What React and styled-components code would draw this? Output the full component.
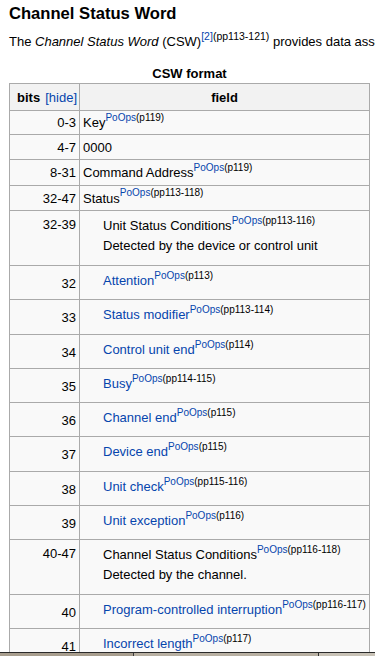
import React from "react";
import styled, { createGlobalStyle } from "styled-components";

const GlobalStyle = createGlobalStyle`
  html, body {
    margin: 0;
    padding: 0;
    background: #FFFFFF;
    overflow: hidden;
  }
  body {
    font-family: "Liberation Sans", Arial, sans-serif;
    color: #000000;
  }
`;

const LINK = "#0645AD";
const BORDER = "#AAAAAA";

const rows = [
  { bits: "0-3", label: "Key", ref: "(p119)", h: 24 },
  { bits: "4-7", label: "0000", h: 25 },
  { bits: "8-31", label: "Command Address", ref: "(p119)", h: 26 },
  { bits: "32-47", label: "Status", ref: "(pp113-118)", h: 25 },
  {
    bits: "32-39",
    label: "Unit Status Conditions",
    ref: "(pp113-116)",
    note: "Detected by the device or control unit",
    nested: true,
    h: 55,
  },
  { bits: "32", label: "Attention", ref: "(p113)", nested: true, link: true, h: 34 },
  { bits: "33", label: "Status modifier", ref: "(pp113-114)", nested: true, link: true, h: 35 },
  { bits: "34", label: "Control unit end", ref: "(p114)", nested: true, link: true, h: 34 },
  { bits: "35", label: "Busy", ref: "(pp114-115)", nested: true, link: true, h: 34 },
  { bits: "36", label: "Channel end", ref: "(p115)", nested: true, link: true, h: 34 },
  { bits: "37", label: "Device end", ref: "(p115)", nested: true, link: true, h: 35 },
  { bits: "38", label: "Unit check", ref: "(pp115-116)", nested: true, link: true, h: 34 },
  { bits: "39", label: "Unit exception", ref: "(p116)", nested: true, link: true, h: 34 },
  {
    bits: "40-47",
    label: "Channel Status Conditions",
    ref: "(pp116-118)",
    note: "Detected by the channel.",
    nested: true,
    h: 55,
  },
  {
    bits: "40",
    label: "Program-controlled interruption",
    ref: "(pp116-117)",
    nested: true,
    link: true,
    h: 34,
  },
  { bits: "41", label: "Incorrect length", ref: "(p117)", nested: true, link: true, h: 34 },
];

const Page = styled.div`
  padding-left: 9px;
`;

const Heading = styled.h2`
  margin: 0;
  padding-top: 4px;
  font-size: 16.6px;
  line-height: 20px;
  font-weight: bold;
`;

const Intro = styled.p`
  margin: 8px 0 0;
  font-size: 13px;
  line-height: 20px;
  white-space: nowrap;
`;

const Caption = styled.div`
  width: 361px;
  margin-top: 14px;
  font-size: 13px;
  line-height: 15px;
  font-weight: bold;
  text-align: center;
`;

const Table = styled.div`
  margin-top: 2px;
  width: 361px;
  box-sizing: border-box;
  border: 1px solid ${BORDER};
  border-bottom: none;
  background: #F9F9F9;
  font-size: 13px;
`;

const Row = styled.div`
  display: grid;
  grid-template-columns: 70px 1fr;
  height: ${(p) => p.$h}px;
  box-sizing: border-box;
  border-bottom: 1px solid ${BORDER};
  background: ${(p) => (p.$head ? "#F2F2F2" : "transparent")};
`;

const BitsCell = styled.div`
  display: flex;
  align-items: ${(p) => (p.$top != null ? "flex-start" : "center")};
  justify-content: flex-end;
  padding: ${(p) => (p.$top != null ? `${p.$top}px 3px 0 0` : "0 3px 0 0")};
  border-right: 1px solid ${BORDER};
  line-height: 15px;
  white-space: nowrap;
`;

const HeadBits = styled(BitsCell)`
  gap: 5px;
  padding-right: 2px;
`;

const HeadField = styled.div`
  display: flex;
  align-items: center;
  justify-content: center;
  font-weight: bold;
`;

const Bold = styled.span`
  font-weight: bold;
`;

const Link = styled.a`
  color: ${LINK};
  text-decoration: none;
  cursor: pointer;
`;

const FieldCell = styled.div`
  display: flex;
  flex-direction: column;
  justify-content: ${(p) => (p.$nested ? "flex-start" : "center")};
  padding: ${(p) => (p.$nested ? "5px 3px 0 23px" : "0 3px")};
  line-height: ${(p) => (p.$nested ? "20px" : "15px")};
  white-space: nowrap;
`;

const Label = styled.span`
  color: ${(p) => (p.$link ? LINK : "inherit")};
`;

const Sup = styled.sup`
  font-size: ${(p) => p.$size || 10}px;
  line-height: 0;
  vertical-align: baseline;
  position: relative;
  top: -6.5px;
`;

const BottomEdge = styled.div`
  position: fixed;
  left: 0;
  right: 0;
  bottom: 0;
  height: 3px;
  border-top: 1px solid #2A2A2A;
  background: linear-gradient(
    to right,
    #A89E8E 0,
    #A89E8E 133px,
    #3A3A3A 133px,
    #3A3A3A 134px,
    #B8B0A2 134px,
    #B8B0A2 318px,
    #2E2E2E 318px,
    #2E2E2E 319px,
    #C8C2B6 319px
  );
`;

function Ref({ text }) {
  return (
    <Sup>
      <Link>PoOps</Link>
      {text}
    </Sup>
  );
}

function DataRow({ row }) {
  const topPad = row.nested ? (row.note ? 6 : 10) : null;
  return (
    <Row $h={row.h}>
      <BitsCell $top={topPad}>{row.bits}</BitsCell>
      <FieldCell $nested={row.nested}>
        <span>
          <Label $link={row.link}>{row.label}</Label>
          {row.ref && <Ref text={row.ref} />}
        </span>
        {row.note && <span>{row.note}</span>}
      </FieldCell>
    </Row>
  );
}

export default function App() {
  return (
    <Page>
      <GlobalStyle />
      <Heading>Channel Status Word</Heading>
      <Intro>
        The <i>Channel Status Word</i> (CSW)
        <Sup $size={10.5}>
          <Link>[2]</Link>
          (pp113-121)
        </Sup>{" "}
        provides data associated with an I/O operation.
      </Intro>
      <Caption>CSW format</Caption>
      <Table>
        <Row $h={27} $head>
          <HeadBits>
            <Bold>bits</Bold>
            <Link>[hide]</Link>
          </HeadBits>
          <HeadField>field</HeadField>
        </Row>
        {rows.map((row) => (
          <DataRow key={row.bits} row={row} />
        ))}
      </Table>
      <BottomEdge />
    </Page>
  );
}
